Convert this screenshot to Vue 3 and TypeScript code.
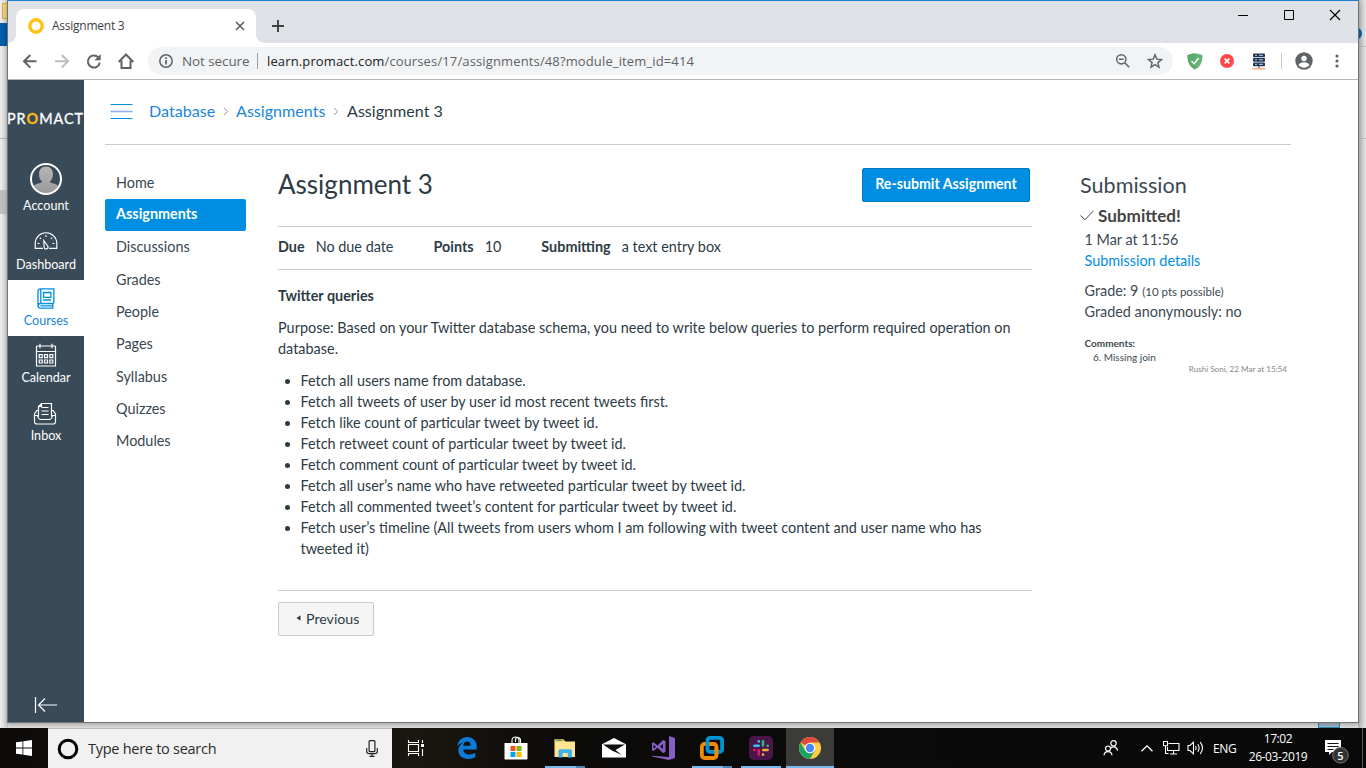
<script setup lang="ts">
interface NavItem { id: string; label: string; active?: boolean }

const navItems: NavItem[] = [
  { id: 'account', label: 'Account' },
  { id: 'dashboard', label: 'Dashboard' },
  { id: 'courses', label: 'Courses', active: true },
  { id: 'calendar', label: 'Calendar' },
  { id: 'inbox', label: 'Inbox' },
]
const courseLinks: string[] = ['Home', 'Assignments', 'Discussions', 'Grades', 'People', 'Pages', 'Syllabus', 'Quizzes', 'Modules']
const queries: string[] = [
  'Fetch all users name from database.',
  'Fetch all tweets of user by user id most recent tweets first.',
  'Fetch like count of particular tweet by tweet id.',
  'Fetch retweet count of particular tweet by tweet id.',
  'Fetch comment count of particular tweet by tweet id.',
  'Fetch all user’s name who have retweeted particular tweet by tweet id.',
  'Fetch all commented tweet’s content for particular tweet by tweet id.',
  'Fetch user’s timeline (All tweets from users whom I am following with tweet content and user name who has tweeted it)',
]
</script>

<template>
  <div class="desktop">
    <div class="back-left"><i class="folder"></i><i class="bluebar"></i><i class="backline"></i><i class="backbox"></i></div>
    <div class="back-right"><i class="backtop"></i><i class="backdot"></i></div>
    <div class="back-tile"></div>

    <div class="window">
      <div class="tabstrip">
        <div class="tab">
          <svg class="favicon" width="16" height="16" viewBox="0 0 16 16"><circle cx="8" cy="8" r="6.2" fill="none" stroke="#ffc20e" stroke-width="3.4" /></svg>
          <span class="tab-title">Assignment 3</span>
          <svg class="tab-close" width="10" height="10" viewBox="0 0 10 10"><path d="M1 1l8 8M9 1l-8 8" stroke="#5f6368" stroke-width="1.7" /></svg>
        </div>
        <svg class="newtab" width="12" height="12" viewBox="0 0 12 12"><path d="M6 0v12M0 6h12" stroke="#3c4043" stroke-width="1.9" /></svg>
        <div class="winbuttons">
          <svg width="46" height="29" viewBox="0 0 46 29"><path d="M18 14.5h10" stroke="#000" /></svg>
          <svg width="46" height="29" viewBox="0 0 46 29"><path d="M18.500 9.500h9v9h-9z" fill="none" stroke="#000" /></svg>
          <svg width="46" height="29" viewBox="0 0 46 29"><path d="M18 9l10 10M28 9l-10 10" stroke="#000" stroke-width="1.2" /></svg>
        </div>
      </div>

      <div class="toolbar">
        <svg class="tool" width="32" height="36" viewBox="0 0 32 36"><path d="M22.500 18.300H10M16.300 12l-6.300 6.300 6.300 6.300" fill="none" stroke="#5f6368" stroke-width="2" /></svg>
        <svg class="tool" width="32" height="36" viewBox="0 0 32 36"><path d="M9 18.300h12.500M15.700 12l6.300 6.300-6.300 6.300" fill="none" stroke="#babcbe" stroke-width="2" /></svg>
        <svg class="tool" width="32" height="36" viewBox="0 0 32 36"><path d="M20.300 14.400a6 6 0 1 0 1.500 5.200" fill="none" stroke="#5f6368" stroke-width="2" /><path d="M22.700 11v6.300h-6.300z" fill="#5f6368" /></svg>
        <svg class="tool" width="32" height="36" viewBox="0 0 32 36"><path d="M8.700 19l7.300-7.500 7.300 7.500M11.500 17.500v7.500h9v-7.500" fill="none" stroke="#5f6368" stroke-width="2" /></svg>
        <div class="omnibox">
          <svg width="16" height="16" viewBox="0 0 16 16"><circle cx="8" cy="8" r="6.200" fill="none" stroke="#5f6368" stroke-width="1.500" /><path d="M8 7v4.500M8 4.200v1.700" stroke="#5f6368" stroke-width="1.700" /></svg>
          <span class="insecure">Not secure</span>
          <i class="omnisep"></i>
          <span class="url">learn.promact.com<em>/courses/17/assignments/48?module_item_id=414</em></span>
          <svg class="mag" width="16" height="16" viewBox="0 0 16 16"><circle cx="6.300" cy="6.300" r="4.600" fill="none" stroke="#5f6368" stroke-width="1.500" /><path d="M4 6.300h4.600M9.700 9.700l4.500 4.500" stroke="#5f6368" stroke-width="1.600" /></svg>
          <svg class="star" width="16" height="16" viewBox="0 0 16 16"><path d="M8 1.800l1.800 4.300 4.700.4-3.600 3.100 1.100 4.600L8 11.700l-4 2.500 1.100-4.600-3.600-3.100 4.700-.4z" fill="none" stroke="#5f6368" stroke-width="1.400" /></svg>
        </div>
        <svg class="ext shield" width="16" height="17" viewBox="0 0 16 17"><path d="M8 .5c2.500 0 5 .6 7.500 1.500 0 6-1.500 11.500-7.500 14.500C2 13.500.5 8 .5 2 3 1.100 5.500.500 8 .500z" fill="#67b279" /><path d="M8 .5v16C2 13.500.5 8 .5 2 3 1.100 5.500.500 8 .500z" fill="#5aab6b" /><path d="M4.500 8l2.500 2.700 4.700-5.500" fill="none" stroke="#fff" stroke-width="1.500" /></svg>
        <svg class="ext red" width="14" height="14" viewBox="0 0 14 14"><circle cx="7" cy="7" r="7" fill="#ff4748" /><path d="M4.700 4.700l4.600 4.600M9.300 4.700l-4.600 4.600" stroke="#fff" stroke-width="1.700" /></svg>
        <svg class="ext server" width="14" height="17" viewBox="0 0 14 17"><g fill="#1f3355"><rect x="1" y="0.500" width="12" height="3.700" rx="1" /><rect x="1" y="5" width="12" height="3.700" rx="1" /><rect x="1" y="9.500" width="12" height="3.700" rx="1" /></g><path d="M3 2.300h2M7 2.300h4M3 6.800h2M7 6.800h4M3 11.300h2M7 11.300h4" stroke="#c5cee0" /><path d="M7 13v2" stroke="#1f3355" /><path d="M0.500 15.700h13" stroke="#ffab73" stroke-width="1.600" /></svg>
        <i class="extsep"></i>
        <svg class="person" width="18" height="18" viewBox="0 0 18 18"><circle cx="9" cy="9" r="8.700" fill="#5f6368" /><circle cx="9" cy="6.500" r="2.700" fill="#fff" /><path d="M3.600 12.900c1.200-3.400 9.600-3.400 10.800 0-2.500 3.700-8.300 3.700-10.800 0z" fill="#fff" /></svg>
        <svg class="kebab" width="4" height="14" viewBox="0 0 4 14"><g fill="#5f6368"><circle cx="2" cy="2" r="1.600" /><circle cx="2" cy="7" r="1.600" /><circle cx="2" cy="12" r="1.600" /></g></svg>
      </div>

      <div class="page">
        <nav class="global-nav">
          <div class="logo">PR<b>O</b>MACT</div>
          <div v-for="item in navItems" :key="item.id" class="nav-item" :class="[item.id, { active: item.active }]">
            <svg v-if="item.id === 'account'" width="32" height="32" viewBox="0 0 32 32">
              <defs>
                <clipPath id="face"><circle cx="16" cy="16" r="15" /></clipPath>
                <linearGradient id="skin" x1="0" y1="0" x2="0" y2="1"><stop offset="0" stop-color="#b6b6b6" /><stop offset="1" stop-color="#989898" /></linearGradient>
              </defs>
              <path clip-path="url(#face)" fill="url(#skin)" d="M16 3.500c4.500 0 7 3.300 7 7.700 0 3.300-1.300 6-3.300 7.500.7 1.800 7.300 1.300 9.300 5.300v8H3v-8c2-4 8.600-3.500 9.300-5.300C10.300 17.200 9 14.500 9 11.200c0-4.400 2.500-7.700 7-7.700z" />
              <circle cx="16" cy="16" r="15" fill="none" stroke="#fff" stroke-width="2" />
            </svg>
            <svg v-else-if="item.id === 'dashboard'" width="24" height="18" viewBox="0 0 24 18" fill="none" stroke="#fff" stroke-width="1.150">
              <path d="M9 16.400H1.200V11.500a10.800 10.800 0 0 1 21.600 0v4.900H15" />
              <path d="M9.800 8.500l4.200 6a2 2 0 0 1-3.800 1.200z" />
              <path d="M12 3v2M5.800 5.600l1.300 1.300M18.200 5.600l-1.300 1.300M3.500 11.500h2M18.500 11.500h2" />
            </svg>
            <svg v-else-if="item.id === 'courses'" width="18" height="21" viewBox="0 0 18 21" fill="none" stroke="#008ee2" stroke-width="1.300">
              <path d="M16.800 15.500H3.400a2.300 2.300 0 0 0 0 4.700h12.900M3.400 15.500C2 15.500 1 16.300 1 18V3.200C1 1.700 2 .8 3.400.8h13.400v14.700M3.800.8v14.700M15.800 15.500v4.700M3.500 17.900h12.300" />
              <path d="M6.500 4.500h7.400v4.800H6.500zM6 12h8" />
            </svg>
            <svg v-else-if="item.id === 'calendar'" width="22" height="24" viewBox="0 0 22 24" fill="none" stroke="#fff" stroke-width="1.200">
              <path d="M1.500 3v20h19V3M1.500 3h19M1.500 8.500h19M5 .8v4.400M17 .8v4.400" />
              <path d="M4.200 11.700h3v3h-3zM9.500 11.700h3v3h-3zM14.800 11.700h3v3h-3zM4.200 17h3v3h-3zM9.500 17h3v3h-3zM14.800 17h3v3h-3z" />
            </svg>
            <svg v-else width="24" height="23" viewBox="0 0 24 23" fill="none" stroke="#fff" stroke-width="1.200">
              <path d="M5.500 14.500V4.500l3-3h10v13M8.500 5.500h7M8.500 9h7M8.500 12.500h7M8.500 1.500v3h-3" />
              <path d="M5.500 8.500H3.800L1.500 12v7.500a2.500 2.500 0 0 0 2.500 2.500h16a2.500 2.500 0 0 0 2.500-2.500V12l-2.300-3.500h-1.700M1.500 13.500h3c.6 3 1.500 4 3.500 4h8c2 0 2.900-1 3.500-4h3" />
            </svg>
            <span>{{ item.label }}</span>
          </div>
          <svg class="collapse" width="24" height="18" viewBox="0 0 24 18"><path d="M1.500 1v16M23 9H5M11 2.500L4.500 9l6.500 6.500" fill="none" stroke="#fff" stroke-width="1.200" /></svg>
        </nav>

        <main class="main">
          <header class="crumbs">
            <svg class="burger" width="24" height="16" viewBox="0 0 24 16"><path d="M.5 1.500h22M.5 15.500h22" stroke="#008ee2" /><path d="M.5 8.500h22" stroke="#8fb0ea" stroke-width="1.600" /></svg>
            <a class="c1">Database</a>
            <svg class="chev" width="6" height="9" viewBox="0 0 6 9"><path d="M1.200 1l3.300 3.500L1.200 8" fill="none" stroke="#8b969e" /></svg>
            <a class="c2">Assignments</a>
            <svg class="chev" width="6" height="9" viewBox="0 0 6 9"><path d="M1.200 1l3.300 3.500L1.200 8" fill="none" stroke="#8b969e" /></svg>
            <span class="c3">Assignment 3</span>
          </header>
          <div class="columns">
            <ul class="course-nav">
              <li v-for="link in courseLinks" :key="link" :class="{ selected: link === 'Assignments' }"><span>{{ link }}</span></li>
            </ul>
            <section class="content">
              <div class="title-row">
                <h1>Assignment 3</h1>
                <button class="resubmit"><span>Re-submit Assignment</span></button>
              </div>
              <div class="details">
                <b>Due</b><span>No due date</span>
                <b>Points</b><span>10</span>
                <b>Submitting</b><span>a text entry box</span>
              </div>
              <h2>Twitter queries</h2>
              <p class="purpose">Purpose: Based on your Twitter database schema, you need to write below queries to perform required operation on database.</p>
              <ul class="queries"><li v-for="q in queries" :key="q">{{ q }}</li></ul>
              <div class="pager">
                <button class="previous"><svg width="5" height="6" viewBox="0 0 5 6"><path d="M4.500.3v5.400L.5 3z" fill="#2d3b45" /></svg><span>Previous</span></button>
              </div>
            </section>
            <aside class="submission">
              <h3>Submission</h3>
              <div class="submitted"><svg width="14" height="11" viewBox="0 0 14 11"><path d="M.5 5.500L5 9.700 13.500.8" fill="none" stroke="#444" /></svg><b>Submitted!</b></div>
              <div class="line">1 Mar at 11:56</div>
              <div class="line"><a>Submission details</a></div>
              <div class="line grade">Grade: 9 <small>(10 pts possible)</small></div>
              <div class="line">Graded anonymously: no</div>
              <div class="comments"><b>Comments:</b></div>
              <div class="comment">6. Missing join</div>
              <div class="author">Rushi Soni, 22 Mar at 15:54</div>
            </aside>
          </div>
        </main>
      </div>
    </div>

    <footer class="taskbar">
      <div class="start"><svg width="16" height="16" viewBox="0 0 16 16" fill="#fff"><path d="M0 2.300l6.500-.9v6.200H0zM7.300 1.300L16 0v7.600H7.300zM0 8.400h6.500v6.200L0 13.700zM7.300 8.400H16V16l-8.700-1.300z" /></svg></div>
      <div class="search">
        <svg width="22" height="22" viewBox="0 0 22 22"><circle cx="11" cy="11" r="8.800" fill="none" stroke="#000" stroke-width="3" /></svg>
        <span>Type here to search</span>
        <svg class="mic" width="12" height="17" viewBox="0 0 12 17" fill="none" stroke="#222" stroke-width="1.200"><rect x="3.100" y=".7" width="5.800" height="11" rx="1" /><path d="M.7 8v3.500c0 1.500.8 2.200 2.300 2.200h6c1.500 0 2.300-.7 2.300-2.200V8M6 13.700v2.500M3.500 16.300h5" /></svg>
      </div>
      <div class="app first"><svg width="18" height="18" viewBox="0 0 18 18" fill="none" stroke="#fff" stroke-width="1.100"><path d="M1.500 1v2.500h10V1M1.500 17v-2.500h10V17M1.500 5.500h10v7h-10zM15.500 1v3M15.500 10v7" /><path d="M14 5h3v3h-3z" fill="#fff" stroke="none" /></svg></div>
      <div class="app"><svg width="22" height="22" viewBox="0 0 22 22"><path d="M1 10C2 3.500 6 0 11 0c6 0 9.700 4.300 9.700 9.500v3H7.200c.3 3.500 3 5 6 5 2.300 0 4.500-.7 6-1.700v4.500c-2 1.200-4.500 1.700-7.200 1.700-5.500 0-9.600-3.300-9.600-8.700 0-3.500 1.900-6.300 5-7.800C4 6 2.200 7.600 1 10zm6.300-1.200h7.300c0-2.800-1.200-4.300-3.500-4.300s-3.500 1.700-3.800 4.300z" fill="#0c7bd8" /></svg></div>
      <div class="app"><svg width="24" height="24" viewBox="0 0 24 24"><path d="M8 7V4.500c0-2 1.500-3.500 3.500-3.500S15 2.500 15 4.500V7M11.500 6V4c0-1.700 1-2.500 2.500-2.500s2.500 1 2.500 3V7" fill="none" stroke="#fff" stroke-width="1.100" /><path d="M.5 7h23v15.500c0 .6-.4 1-1 1h-21c-.6 0-1-.4-1-1z" fill="#fff" /><path d="M6.500 10h5v5h-5z" fill="#f25022" /><path d="M12.500 10h5v5h-5z" fill="#7fba00" /><path d="M6.500 16h5v5h-5z" fill="#00a4ef" /><path d="M12.500 16h5v5h-5z" fill="#ffb900" /></svg></div>
      <div class="app split"><svg width="22" height="19" viewBox="0 0 22 19"><path d="M.5.5h9l2 2H21v15.500H.5z" fill="#ffe591" /><path d="M.5.500h9.500v2H.500z" fill="#f3b829" /><path d="M2.500 1h5v1h-5z" fill="#2fa3e0" /><path d="M4.500 18.500v-7l1.200-1.200h11l1.300 1.200v7h-4.200V14H8.700v4.500z" fill="#3fb3ec" /></svg></div>
      <div class="app"><svg width="24" height="20" viewBox="0 0 24 20"><path d="M0 6.300L12 0l12 6.300V19.500H0z" fill="#fff" /><path d="M1 6.500h22l-9.500 5.500 6 4.700-9.200-4z" fill="#0e0d0c" /></svg></div>
      <div class="app"><svg width="24" height="24" viewBox="0 0 24 24"><path d="M18 0l6 2v20l-6 2-17-3.500v-.7L18 21z" fill="#865fc5" /><path d="M1 7l1.500-.7 4 3.300L12 4l2.500 1v11L12 17l-5.500-5.300-4 3.300L1 14.300zm1.600 1.800v4l2.300-2zM12 8l-3 2.600 3 2.600z" fill="#865fc5" fill-rule="evenodd" /></svg></div>
      <div class="app split"><svg width="24" height="24" viewBox="0 0 24 24" fill="none"><rect x="1.900" y="8" width="14.500" height="14" rx="2.500" stroke="#f38b00" stroke-width="3.800" /><rect x="7.500" y="1.900" width="14.600" height="14" rx="2.500" stroke="#0095d3" stroke-width="3.800" /><path d="M16.400 12v7" stroke="#f38b00" stroke-width="3.800" /></svg></div>
      <div class="app run"><svg width="24" height="24" viewBox="0 0 24 24"><rect width="24" height="24" rx="5" fill="#4a154b" /><g fill="none" stroke-linecap="round" stroke-width="2.600"><path d="M5.500 9.800h4.200M9.800 5.300v.1" stroke="#36c5f0" /><path d="M14 9.500V5.300M18.600 9.800h.1" stroke="#2eb67d" /><path d="M14.300 14h4.300M14 18.600v.1" stroke="#ecb22e" /><path d="M9.800 14.300v4.300M5.400 14h.1" stroke="#e01e5a" /></g></svg></div>
      <div class="app run current"><svg width="24" height="24" viewBox="0 0 24 24"><circle cx="12" cy="12" r="11" fill="#ffcd40" /><path d="M12 12L2.500 6.500A11 11 0 0 1 21.500 6.500H12z" fill="#dd4b3e" /><path d="M2.500 6.500A11 11 0 0 0 12 23l4.800-8.300-9.600 0z" fill="#1da462" /><circle cx="12" cy="12" r="5.300" fill="#fff" /><circle cx="12" cy="12" r="4.200" fill="#4587f4" /></svg></div>
      <div class="tray">
        <svg class="t-people" width="16" height="16" viewBox="0 0 16 16" fill="none" stroke="#fff" stroke-width="1.200"><circle cx="10.500" cy="3.300" r="2.700" /><path d="M7.500 8.500c1-2 6-3 7.200 2" /><circle cx="5" cy="8.500" r="2.500" /><path d="M1 15.300c.5-5 7.500-5 8 0" /></svg>
        <svg class="t-up" width="12" height="7" viewBox="0 0 12 7"><path d="M.5 6.300L6 .9l5.500 5.400" fill="none" stroke="#fff" stroke-width="1.300" /></svg>
        <svg class="t-net" width="17" height="14" viewBox="0 0 17 14" fill="none" stroke="#fff" stroke-width="1.100"><path d="M5.500 2.500H16v7H4.500V6M10.500 9.500v3.500M7 13h7M.5.500h4v4.300h-4zM2.500 5v7.500h3" /></svg>
        <svg class="t-vol" width="18" height="14" viewBox="0 0 18 14" fill="none" stroke="#fff" stroke-width="1.100"><path d="M1 4.500h2l3.500-3.300v11.600L3 9.500H1zM8.500 5c.8 1.300.8 2.700 0 4M10.800 3.200c1.700 2.500 1.700 5.100 0 7.600M13.200 1.200c3 3.800 3 7.800 0 11.600" /></svg>
        <span class="lang">ENG</span>
        <div class="clock"><span>17:02</span><span class="date">26-03-2019</span></div>
        <div class="notice"><svg width="25" height="31" viewBox="0 0 25 31"><path d="M1 2h16v12H8l-3 3v-3H1z" transform="translate(0 5)" fill="#fff" /><path d="M3.500 10.500h11M3.500 13.500h11M3.500 16.500h6" stroke="#111" /><circle cx="16.500" cy="22.300" r="7.800" fill="#333" stroke="#777" /><text x="16.500" y="26.500" text-anchor="middle">5</text></svg></div>
      </div>
    </footer>
  </div>
</template>

<style>
html, body { margin: 0; overflow: hidden; }
</style>
<style scoped>
* { box-sizing: border-box; }
.desktop { position: relative; width: 1366px; height: 768px; overflow: hidden; background: #e4e4e5; display: flex; flex-direction: column; justify-content: flex-end; font-family: "Open Sans", "Noto Sans", sans-serif; }
svg { display: block; flex: none; }
.back-left, .back-right { position: absolute; top: 0; width: 8px; height: 728px; left: 0; background: linear-gradient(90deg, #ededed, #cfcfcf); }
.back-left i, .back-right i { position: absolute; display: block; left: 0; width: 8px; }
.back-left .folder { top: 3px; left: 2px; height: 16px; background: #efd27c; border: 1px solid #d8ae3a; }
.back-left .bluebar { top: 23px; height: 23px; background: #005da8; }
.back-left .backline { top: 138px; height: 1px; background: #b5b5b5; }
.back-left .backbox { top: 190px; height: 24px; background: #c0c0c0; }
.back-right { left: 1358px; background: linear-gradient(90deg, #b9b9b9, #e4e4e4); }
.back-right .backtop { top: 46px; height: 93px; border: solid #bbb; border-width: 1px 0; }
.back-right .backdot { top: 27px; left: -4px; height: 13px; background: #0063b1; border-radius: 0 7px 7px 0; }
.back-tile { position: absolute; left: 1318px; top: 716px; width: 22px; height: 12px; background: #a4bfcd; border: 1px solid #2e8bb8; }

.window { position: absolute; left: 7px; top: 0; width: 1352px; height: 723px; background: #fff; border: 1px solid #737373; border-top-color: #1a80d2; display: flex; flex-direction: column; box-shadow: 0 2px 5px rgba(0,0,0,.28); }
.tabstrip { height: 42px; background: #dee1e6; display: flex; flex: none; }
.tab { position: relative; margin: 8px 0 0 8px; width: 240px; height: 34px; background: #fff; border-radius: 8px 8px 0 0; display: flex; align-items: center; padding: 0 11px 0 12px; }
.tab::before, .tab::after { content: ""; position: absolute; bottom: 0; width: 8px; height: 8px; }
.tab::before { left: -8px; background: radial-gradient(circle at 0 0, transparent 7.500px, #fff 8px); }
.tab::after { right: -8px; background: radial-gradient(circle at 100% 0, transparent 7.500px, #fff 8px); }
.tab-title { margin: -2px 0 0 8px; font-size: 12px; color: #3c4043; letter-spacing: -.25px; flex: 1; }
.newtab { margin: 19px 0 0 16px; }
.winbuttons { display: flex; margin-left: auto; }
.toolbar { height: 37px; flex: none; display: flex; align-items: center; border-bottom: 1px solid #b5b5b6; padding-left: 6px; }
.omnibox { margin-left: 6px; width: 1025px; height: 28px; border-radius: 14px; background: #f1f3f4; display: flex; align-items: center; padding-left: 10px; font-size: 13px; color: #5f6368; white-space: nowrap; }
.insecure { margin-left: 8px; width: 67px; font-size: 13.500px; letter-spacing: -.1px; }
.omnisep { width: 1px; height: 16px; background: #9aa0a6; margin: 0 9px 0 8px; }
.url { color: #202124; letter-spacing: .135px; }
.url em { font-style: normal; color: #5f6368; }
.mag { margin-left: auto; }
.star { margin: 0 10px 0 16px; }
.shield { margin-left: 14px; }
.red { margin-left: 17px; }
.server { margin-left: 18px; }
.extsep { width: 1px; height: 16px; background: #c9cbce; margin: 0 13px 0 15px; }
.kebab { margin-left: 22px; }

.page { flex: 1; display: flex; font-family: Lato, sans-serif; font-size: 14.400px; color: #2d3b45; min-height: 0; }
.global-nav { width: 76px; background: #394b58; display: flex; flex-direction: column; overflow: hidden; color: #fff; }
.logo { height: 75px; padding-top: 30px; font-size: 14.400px; line-height: 18px; font-weight: 400; letter-spacing: .95px; white-space: nowrap; margin-left: -1px; -webkit-text-stroke: .3px currentColor; }
.logo b { color: #fdb913; font-weight: 700; }
.nav-item { display: flex; flex-direction: column; align-items: center; justify-content: flex-end; font-size: 12.600px; line-height: 16px; flex: none; padding-bottom: 7px; }
.nav-item.account { height: 68px; padding-bottom: 9px; }
.nav-item.dashboard { height: 57px; }
.nav-item.courses { height: 56px; }
.nav-item.calendar { height: 57px; }
.nav-item.inbox { height: 58px; }
.account svg { margin-bottom: 3px; }
.dashboard svg { margin: 0 1px 7px 0; }
.courses svg { margin: 0 1px 4px 0; }
.calendar svg { margin: 0 1px 3px 0; }
.inbox svg { margin: 0 2px 3px 0; }
.nav-item.active { background: #fff; color: #1a86da; }
.collapse { margin: auto 0 8px 26px; }
.main { width: 1207px; padding-left: 21px; }
.crumbs { height: 65px; border-bottom: 1px solid #c7cdd1; display: flex; align-items: center; padding: 0 0 2px 5px; font-size: 16.100px; white-space: nowrap; }
.crumbs a, .crumbs span { position: static; margin-top: -2px; }
.crumbs a { color: #1a86da; }
.burger { margin-right: 15px; }
.crumbs .c1 { width: 66px; margin-right: 8px; }
.crumbs .c2 { width: 90px; margin: -2px 7px 0 7px; }
.crumbs .c3 { margin-left: 8px; }
.columns { display: flex; }
.course-nav { list-style: none; margin: 21.500px 0 0; padding: 0; width: 141px; color: #3a4750; }
.course-nav li { height: 32.350px; line-height: 31px; padding-left: 11px; }
.course-nav .selected { background: #008ee2; color: #fff; font-weight: 700; border-radius: 2px; height: 32px; margin-bottom: .35px; line-height: 30px; }
.content { width: 754px; margin-left: 32px; }
.title-row { display: flex; justify-content: space-between; height: 81px; padding: 23px 2px 0 0; }
h1 { margin: 0; font-size: 26px; line-height: 32px; font-weight: 400; }
.resubmit { width: 168px; height: 34px; padding: 0 0 3px; border: 1px solid #0079c1; border-radius: 2px; background: #008ee2; color: #fff; font: 700 14.200px Lato; }
.details { height: 44px; border: solid #c7cdd1; border-width: 1px 0; display: flex; line-height: 40px; }
.details b { margin-right: 11px; }
.details span { margin-right: 40px; }
h2 { margin: 15px 0 0; font-size: 14.400px; line-height: 21px; font-weight: 700; }
.purpose { margin: 11px 0; line-height: 21px; letter-spacing: .02px; font-feature-settings: "liga" 1; }
.queries { margin: 0; padding-left: 22.500px; line-height: 21px; }
.pager { margin-top: 31px; border-top: 1px solid #c7cdd1; padding-top: 11px; }
.previous { width: 96px; height: 34px; border: 1px solid #c7cdd1; border-radius: 2px; background: #f5f5f5; display: flex; align-items: center; padding: 0 0 2px 17px; gap: 5px; font: 14.200px Lato; color: #2d3b45; }
.submission { width: 211px; margin-left: 48px; white-space: nowrap; flex: none; color: #3c4952; }
h3 { margin: 26px 0 0; font-size: 21.600px; line-height: 28px; font-weight: 400; }
.submitted { display: flex; align-items: center; gap: 4px; height: 24px; margin-top: 5px; padding-bottom: 1px; font-size: 17.100px; color: #444; margin-bottom: 1px; }
.line { padding-left: 4.500px; line-height: 21px; height: 21px; }
.line a { color: #008ee2; }
.grade { margin-top: 9px; }
small { font-size: 11.500px; }
.comments { margin: 14px 0 0 4.500px; font-size: 10px; line-height: 14px; }
.comment { margin-left: 13px; font-size: 10px; line-height: 14px; }
.author { text-align: right; padding-right: 4px; font-size: 8.100px; line-height: 10px; color: #84898d; }

.taskbar { position: relative; height: 40px; display: flex; background: linear-gradient(90deg, #0c0b09, #1a1610 420px, #0c0b0a 560px, #090909); color: #fff; }
.start { width: 48px; display: flex; align-items: center; justify-content: center; }
.search { width: 344px; background: #f1f1f1; border-top: 1px solid #b9b9b9; display: flex; align-items: center; color: #2b2b2b; padding: 0 14px 0 9px; }
.search span { margin-left: 9px; font-size: 14.500px; letter-spacing: -.27px; white-space: nowrap; }
.mic { margin-left: auto; }
.app { position: relative; width: 49px; display: flex; align-items: center; justify-content: center; }
.app.first { width: 50px; padding-right: 2px; }
.app.run::after, .app.split::after { content: ""; position: absolute; bottom: 0; left: 5px; width: 40px; height: 2px; background: #76b9ed; }
.app.split::after { background: linear-gradient(90deg, #76b9ed 31px, #5085b0 31px); }
.app.current { background: #3b3b3a; width: 48px; margin-left: 1px; }
.app.current::after { left: 0; width: 48px; }
.tray { margin-left: auto; display: flex; align-items: center; padding-right: 3px; }
.t-up { margin-left: 22px; }
.t-net { margin-left: 10px; }
.t-vol { margin-left: 7px; }
.lang { margin-left: 8px; width: 25px; font-size: 12px; letter-spacing: -.4px; }
.clock { width: 60px; margin: -1px 0 0 10px; display: flex; flex-direction: column; align-items: center; font-size: 12px; line-height: 18px; letter-spacing: -.4px; white-space: nowrap; }
.notice { margin-left: 16px; padding: 5px 13px 0 0; height: 40px; border-right: 1px solid #555; }
.notice text { font: 600 11px "Open Sans"; fill: #fff; }
</style>
